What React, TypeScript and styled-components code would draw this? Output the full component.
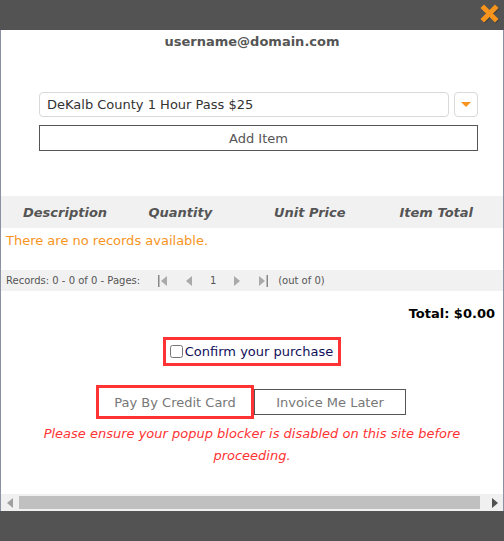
import styled, { createGlobalStyle } from "styled-components";

const GlobalStyle = createGlobalStyle`
  html, body {
    margin: 0;
    padding: 0;
    background-color: #535353;
  }
  body {
    font-family: "DejaVu Sans", Verdana, sans-serif;
  }
`;

const Page = styled.div`
  width: 504px;
  height: 541px;
  display: flex;
  flex-direction: column;
  background-color: #535353;
  overflow: hidden;
`;

const TopBar = styled.div`
  height: 30px;
  display: flex;
  justify-content: flex-end;
  align-items: flex-start;
  padding: 4px 4px 0 0;
  box-sizing: border-box;
`;

const CloseBtn = styled.button`
  width: 20px;
  height: 20px;
  padding: 0;
  border: none;
  background: none;
  cursor: pointer;
`;

const Panel = styled.div`
  height: 481px;
  background-color: #fff;
  border-left: 1px solid #8c90a3;
  border-right: 1px solid #8c90a3;
  display: flex;
  flex-direction: column;
  overflow: hidden;
`;

const Content = styled.div`
  flex: 1;
  display: flex;
  flex-direction: column;
`;

const User = styled.div`
  text-align: center;
  font-weight: bold;
  font-size: 13px;
  color: #555;
  line-height: 16px;
  padding-top: 4px;
`;

const Form = styled.div`
  padding: 42px 25px 0 38px;
  display: flex;
  flex-direction: column;
  gap: 8px;
`;

const SelectRow = styled.div`
  display: flex;
  gap: 5px;
`;

const SelectBox = styled.div`
  flex: 1;
  height: 25px;
  box-sizing: border-box;
  border: 1px solid #d9d9d9;
  border-radius: 4px;
  padding: 0 7px;
  display: flex;
  align-items: center;
  font-size: 13px;
  color: #333;
`;

const DropBtn = styled.div`
  width: 24px;
  height: 25px;
  box-sizing: border-box;
  border: 1px solid #d9d9d9;
  border-radius: 4px;
  display: flex;
  align-items: center;
  justify-content: center;
`;

const OutlineButton = styled.button<{ $width?: number }>`
  height: 26px;
  width: ${(p) => (p.$width ? `${p.$width}px` : "100%")};
  box-sizing: border-box;
  border: 1px solid #555;
  background: #fff;
  font-family: "DejaVu Sans", Verdana, sans-serif;
  font-size: 13px;
  color: #555;
  padding: 0;
  cursor: pointer;
`;

const Grid = styled.div`
  margin-top: 45px;
  display: flex;
  flex-direction: column;
`;

const HeaderRow = styled.div`
  height: 32px;
  background-color: #f1f1f1;
  display: grid;
  grid-template-columns: repeat(4, 1fr);
  align-items: center;
`;

const HeaderCell = styled.div`
  padding-left: 22px;
  font-weight: bold;
  font-style: italic;
  font-size: 13px;
  color: #555;
`;

const EmptyRow = styled.div`
  height: 42px;
  padding: 5px 5px 0;
  box-sizing: border-box;
  font-size: 13px;
  color: #f7941d;
`;

const Pager = styled.div`
  height: 21px;
  background-color: #f1f1f1;
  display: flex;
  align-items: center;
  padding-left: 5px;
  font-size: 10px;
  color: #555;
`;

const PagerIcons = styled.div`
  display: flex;
  align-items: center;
  margin-left: 10px;
`;

const PagerIcon = styled.span`
  width: 26px;
  display: flex;
  justify-content: center;
  align-items: center;
`;

const PageNum = styled.span`
  width: 22px;
  text-align: center;
  color: #555;
`;

const OutOf = styled.span`
  margin-left: 2px;
`;

const Total = styled.div`
  text-align: right;
  padding: 15px 8px 0 0;
  font-weight: bold;
  font-size: 13px;
  color: #000;
`;

const ConfirmWrap = styled.div`
  display: flex;
  justify-content: center;
  margin-top: 16px;
`;

const Highlight = styled.label`
  border: 3px solid #ff3333;
  display: flex;
  align-items: center;
  gap: 2px;
  height: 29px;
  box-sizing: border-box;
  padding: 0 5px 0 4px;
  font-size: 13px;
  color: #10105a;
  cursor: pointer;
  input {
    margin: 0;
    width: 13px;
    height: 13px;
  }
`;

const PayRow = styled.div`
  display: flex;
  justify-content: center;
  align-items: center;
  margin-top: 19px;
  padding-right: 2px;
`;

const RedFrame = styled.div`
  border: 3px solid #ff3333;
  height: 34px;
  box-sizing: border-box;
  display: flex;
  align-items: center;
`;

const GrayButton = styled(OutlineButton)`
  color: #777;
  border-color: #555;
`;

const FrameButton = styled(GrayButton)`
  border-color: transparent;
  height: 28px;
`;

const Warning = styled.p`
  margin: 4px 0 0;
  text-align: center;
  font-style: italic;
  font-size: 13px;
  line-height: 22px;
  color: #ff3333;
  padding: 0 30px;
`;

const HScroll = styled.div`
  height: 17px;
  background-color: #f0f0f0;
  display: flex;
  align-items: center;
`;

const ScrollArrow = styled.div`
  width: 17px;
  display: flex;
  justify-content: center;
  align-items: center;
`;

const Thumb = styled.div`
  flex: 1;
  height: 13px;
  background-color: #c0c0c0;
  margin: 0 6px 0 1px;
`;

const Bottom = styled.div`
  flex: 1;
`;

const Tri = ({ dir, color = "#999" }: { dir: "l" | "r"; color?: string }) => (
  <svg width="6" height="10" viewBox="0 0 6 10">
    <polygon points={dir === "l" ? "6,0 0,5 6,10" : "0,0 6,5 0,10"} fill={color} />
  </svg>
);

const EdgeIcon = ({ dir }: { dir: "l" | "r" }) => (
  <svg width="10" height="12" viewBox="0 0 10 12">
    {dir === "l" ? (
      <>
        <rect x="0" y="0" width="1.5" height="12" fill="#888" />
        <polygon points="9,1 3,6 9,11" fill="#aaa" />
      </>
    ) : (
      <>
        <polygon points="1,1 7,6 1,11" fill="#aaa" />
        <rect x="8.5" y="0" width="1.5" height="12" fill="#888" />
      </>
    )}
  </svg>
);

function App() {
  return (
    <>
      <GlobalStyle />
      <Page>
        <TopBar>
          <CloseBtn aria-label="close">
            <svg width="20" height="20" viewBox="0 0 20 20">
              <g stroke="#3a3a3a" strokeWidth="5" strokeLinecap="square" opacity="0.6">
                <line x1="5" y1="5" x2="16" y2="16" />
                <line x1="16" y1="5" x2="5" y2="16" />
              </g>
              <g stroke="#f7941d" strokeWidth="5" strokeLinecap="square">
                <line x1="4" y1="4" x2="15" y2="15" />
                <line x1="15" y1="4" x2="4" y2="15" />
              </g>
            </svg>
          </CloseBtn>
        </TopBar>
        <Panel>
          <Content>
            <User>username@domain.com</User>
            <Form>
              <SelectRow>
                <SelectBox>DeKalb County 1 Hour Pass $25</SelectBox>
                <DropBtn>
                  <svg width="10" height="6" viewBox="0 0 10 6">
                    <polygon points="0,0 10,0 5,5" fill="#f7941d" />
                  </svg>
                </DropBtn>
              </SelectRow>
              <OutlineButton>Add Item</OutlineButton>
            </Form>
            <Grid>
              <HeaderRow>
                <HeaderCell>Description</HeaderCell>
                <HeaderCell>Quantity</HeaderCell>
                <HeaderCell>Unit Price</HeaderCell>
                <HeaderCell>Item Total</HeaderCell>
              </HeaderRow>
              <EmptyRow>There are no records available.</EmptyRow>
              <Pager>
                Records: 0 - 0 of 0 - Pages:
                <PagerIcons>
                  <PagerIcon>
                    <EdgeIcon dir="l" />
                  </PagerIcon>
                  <PagerIcon>
                    <Tri dir="l" color="#aaa" />
                  </PagerIcon>
                  <PageNum>1</PageNum>
                  <PagerIcon>
                    <Tri dir="r" color="#aaa" />
                  </PagerIcon>
                  <PagerIcon>
                    <EdgeIcon dir="r" />
                  </PagerIcon>
                </PagerIcons>
                <OutOf>(out of 0)</OutOf>
              </Pager>
            </Grid>
            <Total>Total: $0.00</Total>
            <ConfirmWrap>
              <Highlight>
                <input type="checkbox" />
                Confirm your purchase
              </Highlight>
            </ConfirmWrap>
            <PayRow>
              <RedFrame>
                <FrameButton $width={152}>Pay By Credit Card</FrameButton>
              </RedFrame>
              <GrayButton $width={152}>Invoice Me Later</GrayButton>
            </PayRow>
            <Warning>
              Please ensure your popup blocker is disabled on this site before proceeding.
            </Warning>
          </Content>
          <HScroll>
            <ScrollArrow>
              <Tri dir="l" color="#a0a0a0" />
            </ScrollArrow>
            <Thumb />
            <ScrollArrow>
              <Tri dir="r" color="#505050" />
            </ScrollArrow>
          </HScroll>
        </Panel>
        <Bottom />
      </Page>
    </>
  );
}

export default App;
